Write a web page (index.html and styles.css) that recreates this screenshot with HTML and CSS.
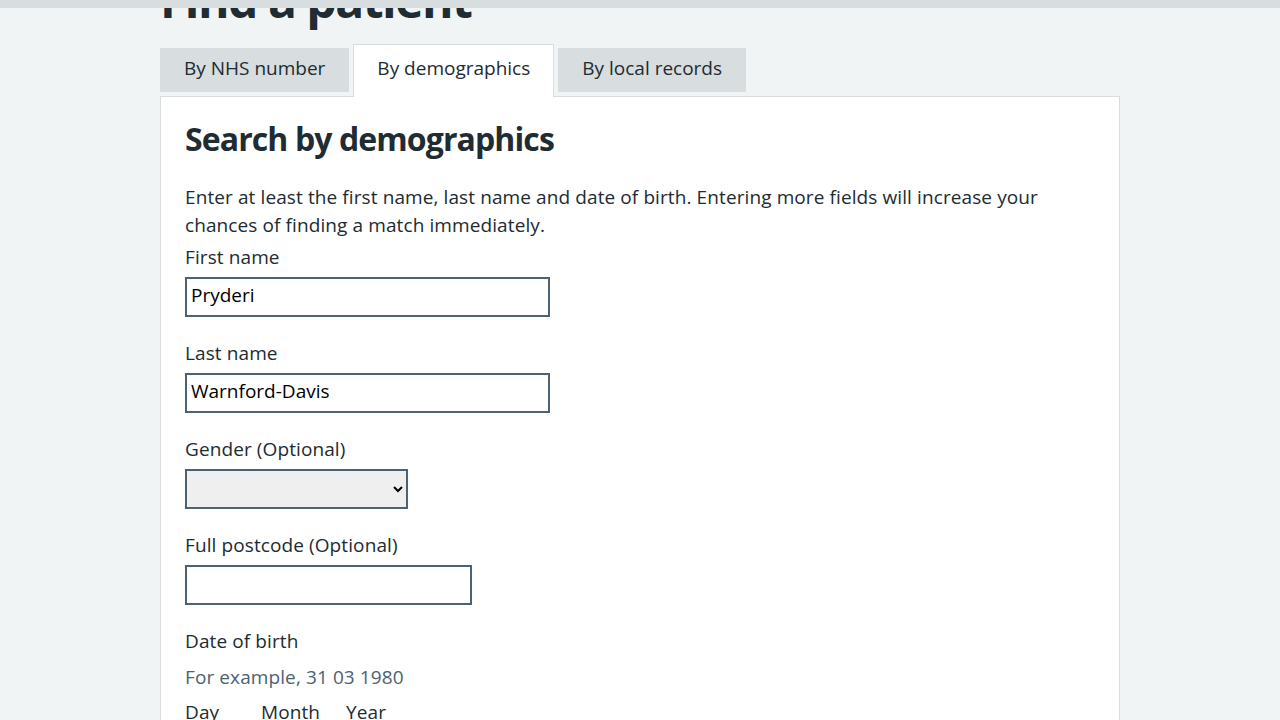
FILE: index.html
```html
<!DOCTYPE html>
<html lang="en">
<head>
<meta charset="utf-8">
<title>Find a patient</title>
<link rel="stylesheet" href="styles.css">
</head>
<body>
<div class="topbar"></div>
<main class="page">
  <h1 class="page-title">Find a patient</h1>
  <ul class="tabs">
    <li class="tab">By NHS number</li>
    <li class="tab tab-active">By demographics</li>
    <li class="tab">By local records</li>
  </ul>
  <section class="panel">
    <h2 class="panel-title">Search by demographics</h2>
    <p class="intro">Enter at least the first name, last name and date of birth. Entering more fields will increase your chances of finding a match immediately.</p>
    <div class="form-group">
      <label class="label" for="fn">First name</label>
      <input class="input input-wide" id="fn" type="text" value="Pryderi">
    </div>
    <div class="form-group">
      <label class="label" for="ln">Last name</label>
      <input class="input input-wide" id="ln" type="text" value="Warnford-Davis">
    </div>
    <div class="form-group">
      <label class="label" for="gender">Gender (Optional)</label>
      <select class="select" id="gender">
        <option></option>
        <option>Female</option>
        <option>Male</option>
      </select>
    </div>
    <div class="form-group">
      <label class="label" for="pc">Full postcode (Optional)</label>
      <input class="input input-postcode" id="pc" type="text">
    </div>
    <div class="form-group">
      <div class="label label-legend">Date of birth</div>
      <div class="hint">For example, 31 03 1980</div>
      <div class="date">
        <div class="date-item date-day">
          <label class="label" for="dd">Day</label>
          <input class="input input-2" id="dd" type="text">
        </div>
        <div class="date-item date-month">
          <label class="label" for="mm">Month</label>
          <input class="input input-2" id="mm" type="text">
        </div>
        <div class="date-item">
          <label class="label" for="yy">Year</label>
          <input class="input input-4" id="yy" type="text">
        </div>
      </div>
    </div>
  </section>
</main>
</body>
</html>
```
FILE: styles.css
```css
* { box-sizing: border-box; }
html, body { margin: 0; padding: 0; }
body {
  background: #f0f4f5;
  color: #212b32;
  font-family: "Open Sans", "Noto Sans", sans-serif;
  font-size: 19px;
  line-height: 28px;
  letter-spacing: 0.1px;
}
.topbar {
  position: relative;
  z-index: 2;
  height: 8px;
  background: #d8dde0;
}
.page {
  width: 960px;
  margin: 0 auto;
}
.page-title {
  margin: -36px 0 0;
  font-size: 48px;
  line-height: 56px;
  font-weight: 700;
  letter-spacing: -1.5px;
  height: 56px;
}
.tabs {
  list-style: none;
  margin: 16px 0 -1px;
  padding: 0;
  display: flex;
  align-items: flex-start;
  gap: 4px;
  position: relative;
  z-index: 1;
  letter-spacing: 0;
}
.tab {
  margin-top: 4px;
  height: 44px;
  line-height: 40px;
  padding: 0 24px 4px;
  background: #d8dde0;
  color: #212b32;
  white-space: nowrap;
}
.tab-active {
  margin-top: 0;
  height: 53px;
  padding: 3px 23px 10px;
  background: #fff;
  border: 1px solid #d8dde0;
  border-bottom: 0;
}
.panel {
  background: #fff;
  border: 1px solid #d8dde0;
  padding: 22px 24px 40px;
}
.panel-title {
  margin: 0 0 24px;
  font-size: 32px;
  line-height: 40px;
  font-weight: 700;
  letter-spacing: -0.9px;
}
.intro {
  margin: 0 0 6px;
}
.form-group {
  margin-bottom: 24px;
}
.label {
  display: block;
  line-height: 24px;
  margin-bottom: 8px;
}
.label-legend {
  margin-bottom: 10px;
}
.input {
  display: block;
  height: 40px;
  border: 2px solid #4c6272;
  padding: 0 4px 4px;
  font: inherit;
  color: #000;
  background: #fff;
  border-radius: 0;
}
.input-wide { width: 365px; }
.input-postcode { width: 287px; }
.select {
  display: block;
  width: 223px;
  height: 40px;
  border: 2px solid #4c6272;
  border-radius: 0;
  background-color: #efefef;
  font: inherit;
  color: #000;
}
.hint {
  color: #4c6272;
  margin-bottom: 9px;
}
.date {
  display: flex;
  gap: 24px;
}
.date-item .label { margin-bottom: 8px; }
.date-day { width: 52px; }
.date-month { width: 61px; }
.input-2 { width: 52px; }
.input-4 { width: 80px; }
```
